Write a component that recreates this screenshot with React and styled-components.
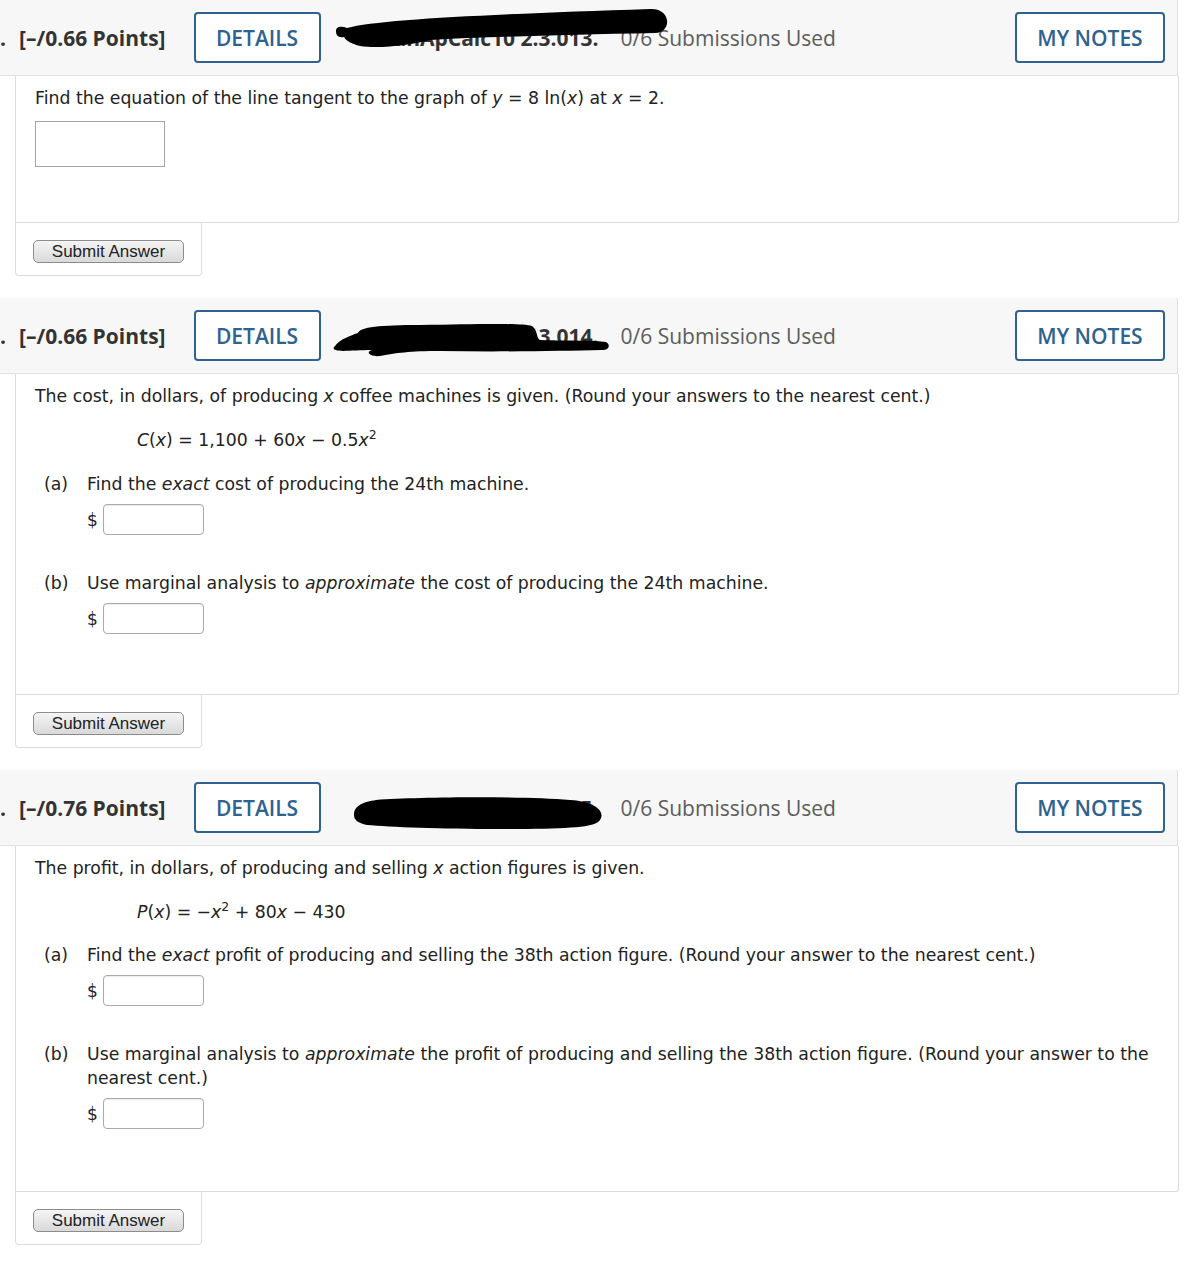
import React from 'react';
import styled, { createGlobalStyle } from 'styled-components';

const GlobalStyle = createGlobalStyle`
  html, body {
    margin: 0;
    padding: 0;
    background: #fff;
  }
  body {
    width: 1200px;
    font-family: 'DejaVu Sans', Verdana, sans-serif;
  }
`;

const Page = styled.div`
  display: flex;
  flex-direction: column;
  gap: 22px;
  padding-bottom: 20px;
`;

const Question = styled.section`
  display: flex;
  flex-direction: column;
`;

const Header = styled.header`
  position: relative;
  display: flex;
  align-items: center;
  height: 76px;
  width: 1178px;
  box-sizing: border-box;
  padding-right: 12px;
  background: #f7f7f7;
  border-bottom: 1px solid #e2e2e2;
  border-right: 1px solid #dedede;
  font-family: 'Open Sans', 'Noto Sans', sans-serif;
  font-size: 21px;
`;

const Points = styled.span`
  font-weight: 700;
  color: #333;
  white-space: nowrap;
  margin-right: 28px;
`;

const Dot = styled.span`
  margin-right: 13px;
`;

const OutlineButton = styled.button`
  height: 51px;
  width: ${(p) => p.$w}px;
  box-sizing: border-box;
  border: 2px solid #2f6290;
  border-radius: 4px;
  background: #fff;
  color: #2f6290;
  font-family: 'Open Sans', 'Noto Sans', sans-serif;
  font-size: 21px;
  font-weight: 600;
  padding: 0;
  margin-left: ${(p) => (p.$right ? 'auto' : '0')};
`;

const QuestionId = styled.span`
  width: 251px;
  margin-left: 27px;
  margin-right: 22px;
  text-align: right;
  white-space: nowrap;
  overflow: hidden;
  font-weight: 700;
  color: #333;
`;

const Submissions = styled.span`
  color: #5c5c5c;
`;

const Redaction = styled.svg`
  position: absolute;
  left: 0;
  top: 0;
  width: 700px;
  height: 76px;
  pointer-events: none;
`;

const Body = styled.div`
  margin-left: 15px;
  width: 1164px;
  box-sizing: border-box;
  padding: 10px 19px ${(p) => p.$bottom}px;
  border-left: 1px solid #dcdcdc;
  border-right: 1px solid #dcdcdc;
  border-bottom: 1px solid #dcdcdc;
  border-radius: 0 0 3px 0;
  font-size: 17.3px;
  line-height: 24px;
  color: #222;
  display: flex;
  flex-direction: column;
  align-items: flex-start;
`;

const Text = styled.p`
  margin: 0;
`;

const Formula = styled.p`
  margin: 20px 0 0 102px;
`;

const Sup = styled.sup`
  font-size: 12.5px;
  line-height: 0;
  vertical-align: 7px;
`;

const BigInput = styled.input`
  margin-top: 11px;
  width: 130px;
  height: 46px;
  box-sizing: border-box;
  border: 1px solid #a4a4a4;
  background: #fff;
`;

const Part = styled.div`
  display: grid;
  grid-template-columns: 43px 1fr;
  margin: ${(p) => p.$top}px 0 0 9px;
`;

const PartLabel = styled.span``;

const PartContent = styled.div`
  display: flex;
  flex-direction: column;
  align-items: flex-start;
`;

const AnswerRow = styled.div`
  display: flex;
  align-items: center;
  gap: 5px;
  margin-top: 8px;
`;

const Dollar = styled.span`
  font-size: 17px;
`;

const SmallInput = styled.input`
  width: 101px;
  height: 31px;
  box-sizing: border-box;
  border: 1px solid #a9a9a9;
  border-radius: 4px;
  background: #fff;
  box-shadow: inset 0 1px 1px rgba(0, 0, 0, 0.08);
`;

const SubmitBar = styled.div`
  margin-left: 15px;
  width: 187px;
  box-sizing: border-box;
  padding: 17px 17px 12px;
  border: 1px solid #dcdcdc;
  border-top: none;
  border-radius: 0 0 4px 4px;
`;

const SubmitButton = styled.button`
  width: 151px;
  height: 23px;
  box-sizing: border-box;
  padding: 0;
  border: 1px solid #8c8c8c;
  border-radius: 5px;
  background: linear-gradient(#f5f5f5, #d9d9d9);
  font-family: 'Liberation Sans', Arial, sans-serif;
  font-size: 17px;
  color: #222;
  line-height: 20px;
`;

const blobs = [
  'M336,31 C336,26 342,26 347,28 C380,19 500,14 650,9 C672,8 672,33 655,33 C560,35 480,37 430,40 C410,45 380,49 360,46 C352,44 346,41 344,37 C338,38 336,35 336,31 Z',
  'M335,48 C340,41 352,37 358,35 C360,29 380,27 420,27 C480,26 520,25 532,28 C538,32 536,40 540,42 C570,43 595,42 606,44 C611,47 609,52 602,52 C560,53 500,54 440,53 C410,53 395,55 380,58 C370,59 365,54 372,52 C355,52 340,54 336,52 C333,51 333,50 335,48 Z',
  'M354,45 C354,35 364,32 376,30 C420,27 520,26 570,30 C602,32 606,46 598,52 C590,58 560,59 500,59 C440,59 390,57 367,55 C358,53 354,50 354,45 Z',
];

const QuestionHeader = ({ points, id, blob }) => (
  <Header>
    <Points>
      <Dot>.</Dot>[–/{points} Points]
    </Points>
    <OutlineButton $w={127}>DETAILS</OutlineButton>
    <QuestionId>{id}</QuestionId>
    <Submissions>0/6 Submissions Used</Submissions>
    <OutlineButton $w={150} $right>MY NOTES</OutlineButton>
    <Redaction viewBox="0 0 700 76">
      <path d={blobs[blob]} fill="#000" />
    </Redaction>
  </Header>
);

const Submit = () => (
  <SubmitBar>
    <SubmitButton>Submit Answer</SubmitButton>
  </SubmitBar>
);

const Answer = () => (
  <AnswerRow>
    <Dollar>$</Dollar>
    <SmallInput />
  </AnswerRow>
);

export default function App() {
  return (
    <>
      <GlobalStyle />
      <Page>
        <Question>
          <QuestionHeader points="0.66" id="TanApCalc10 2.3.013." blob={0} />
          <Body $bottom={55}>
            <Text>
              Find the equation of the line tangent to the graph of <i>y</i> = 8 ln(<i>x</i>) at <i>x</i> = 2.
            </Text>
            <BigInput />
          </Body>
          <Submit />
        </Question>

        <Question>
          <QuestionHeader points="0.66" id="TanApCalc10 2.3.014." blob={1} />
          <Body $bottom={60}>
            <Text>
              The cost, in dollars, of producing <i>x</i> coffee machines is given. (Round your answers to the nearest cent.)
            </Text>
            <Formula>
              <i>C</i>(<i>x</i>) = 1,100 + 60<i>x</i> − 0.5<i>x</i><Sup>2</Sup>
            </Formula>
            <Part $top={20}>
              <PartLabel>(a)</PartLabel>
              <PartContent>
                <Text>Find the <i>exact</i> cost of producing the 24th machine.</Text>
                <Answer />
              </PartContent>
            </Part>
            <Part $top={36}>
              <PartLabel>(b)</PartLabel>
              <PartContent>
                <Text>Use marginal analysis to <i>approximate</i> the cost of producing the 24th machine.</Text>
                <Answer />
              </PartContent>
            </Part>
          </Body>
          <Submit />
        </Question>

        <Question>
          <QuestionHeader points="0.76" id="TanApCalc10 2.3.015." blob={2} />
          <Body $bottom={62}>
            <Text>
              The profit, in dollars, of producing and selling <i>x</i> action figures is given.
            </Text>
            <Formula>
              <i>P</i>(<i>x</i>) = −<i>x</i><Sup>2</Sup> + 80<i>x</i> − 430
            </Formula>
            <Part $top={19}>
              <PartLabel>(a)</PartLabel>
              <PartContent>
                <Text>
                  Find the <i>exact</i> profit of producing and selling the 38th action figure. (Round your answer to the nearest cent.)
                </Text>
                <Answer />
              </PartContent>
            </Part>
            <Part $top={36}>
              <PartLabel>(b)</PartLabel>
              <PartContent>
                <Text>
                  Use marginal analysis to <i>approximate</i> the profit of producing and selling the 38th action figure. (Round your answer to the nearest cent.)
                </Text>
                <Answer />
              </PartContent>
            </Part>
          </Body>
          <Submit />
        </Question>
      </Page>
    </>
  );
}
